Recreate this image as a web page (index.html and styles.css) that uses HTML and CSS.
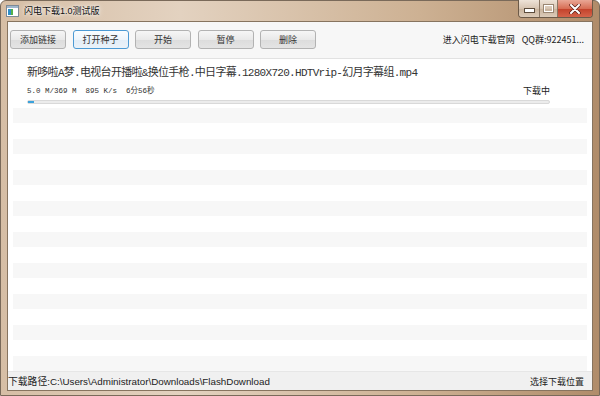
FILE: index.html
```html
<!DOCTYPE html>
<html lang="zh-CN">
<head>
<meta charset="UTF-8">
<title>闪电下载1.0测试版</title>
<link rel="stylesheet" href="styles.css">
</head>
<body>

<div class="window">
    <div class="titlebar">
        <svg class="app-icon" width="13" height="12" viewBox="0 0 13 12">
            <rect x="0.5" y="0.5" width="12" height="11" fill="#fff" stroke="#7d8a96"/>
            <rect x="1" y="1" width="11" height="2" fill="#9fb6cc"/>
            <rect x="2" y="4" width="3" height="6" fill="#2f8fc9"/>
            <rect x="5" y="4" width="2" height="6" fill="#53b04a"/>
        </svg>
        <span class="title">闪电下载1.0测试版</span>
        <div class="controls">
            <div class="ctl ctl-min"><span class="min-bar"></span></div>
            <div class="ctl ctl-max"><span class="max-box"></span></div>
            <div class="ctl ctl-close">
                <svg width="12" height="10" viewBox="0 0 12 10">
                    <path d="M2 1 L10 9 M10 1 L2 9" stroke="#5a2018" stroke-width="3.4" stroke-linecap="round"/>
                    <path d="M2 1 L10 9 M10 1 L2 9" stroke="#fff" stroke-width="2" stroke-linecap="round"/>
                </svg>
            </div>
        </div>
    </div>

    <div class="client">
        <div class="toolbar">
            <button class="btn">添加链接</button>
            <button class="btn btn-focus">打开种子</button>
            <button class="btn">开始</button>
            <button class="btn">暂停</button>
            <button class="btn">删除</button>
            <span class="spacer"></span>
            <span class="link">进入闪电下载官网</span>
            <span class="link">QQ群:922451...</span>
        </div>

        <div class="list">
            <div class="task">
                <div class="task-name">新哆啦A梦.电视台开播啦&amp;换位手枪.中日字幕.1280X720.HDTVrip-幻月字幕组.mp4</div>
                <div class="task-info">
                    <span class="stats">5.0 M/369 M&nbsp;&nbsp;895 K/s&nbsp;&nbsp;6分56秒</span>
                    <span class="state">下载中</span>
                </div>
                <div class="progress"><div class="progress-fill" style="width: 1.2%"></div></div>
            </div>
            <div class="row"></div>
            <div class="row"></div>
            <div class="row"></div>
            <div class="row"></div>
            <div class="row"></div>
            <div class="row"></div>
            <div class="row"></div>
            <div class="row"></div>
            <div class="row"></div>
            <div class="row"></div>
            <div class="row"></div>
            <div class="row"></div>
            <div class="row"></div>
            <div class="row"></div>
            <div class="row"></div>
            <div class="row"></div>
            <div class="row"></div>
        </div>

        <div class="statusbar">
            <span class="path">下载路径:C:\Users\Administrator\Downloads\FlashDownload</span>
            <span class="choose">选择下载位置</span>
        </div>
    </div>
</div>

</body>
</html>
```

FILE: styles.css
```css
body {
    margin: 0;
    padding: 0;
    overflow: hidden;
    font-family: "Liberation Sans", "Noto Sans CJK SC", sans-serif;
    font-size: 10px;
    color: #222;
}

.window {
    width: 600px;
    height: 396px;
    box-sizing: border-box;
    display: flex;
    flex-direction: column;
    background: linear-gradient(to right, #d6bea5 0%, #e3d2c0 30%, #cdb193 70%, #b08c6a 100%);
    border: 1px solid #7a6a5a;
    border-radius: 6px 6px 0 0;
    padding: 0 6px 4px 6px;
}

.titlebar {
    height: 20px;
    display: flex;
    align-items: center;
    position: relative;
}

.app-icon {
    margin: 1px 5px 0 -1px;
}

.title {
    font-size: 9px;
    color: #111;
    text-shadow: 0 0 6px #fff, 0 0 3px #fff;
}

.controls {
    position: absolute;
    top: -1px;
    right: 0;
    display: flex;
    height: 17px;
    border: 1px solid #6c5a48;
    border-top: none;
    border-radius: 0 0 4px 4px;
    overflow: hidden;
}

.ctl {
    display: flex;
    align-items: center;
    justify-content: center;
    background: linear-gradient(#eee3d8, #d7c4b1 50%, #c8b29b 51%, #dccbb9);
    border-right: 1px solid #8b7764;
}

.ctl-min {
    width: 20px;
}

.ctl-max {
    width: 17px;
}

.ctl-close {
    width: 34px;
    border-right: none;
    background: linear-gradient(#e9a795, #d76e55 50%, #c2412a 51%, #d5634a);
}

.min-bar {
    width: 9px;
    height: 3px;
    background: #fff;
    border: 1px solid #5c4c3c;
    margin-top: 4px;
}

.max-box {
    width: 7px;
    height: 5px;
    border: 1px solid #fff;
    outline: 1px solid #9a8672;
}

.client {
    flex: 1;
    display: flex;
    flex-direction: column;
    background: #fff;
    border: 1px solid #87745f;
}

.toolbar {
    height: 36px;
    display: flex;
    align-items: center;
    padding: 0 8px 0 2px;
    background: #f7f7f7;
    border-bottom: 1px solid #e2e2e2;
}

.btn {
    width: 56px;
    height: 19px;
    margin-right: 6.5px;
    padding: 0;
    font-family: "Noto Sans CJK SC", sans-serif;
    font-size: 9px;
    color: #333;
    background: linear-gradient(#f6f6f6, #e9e9e9 50%, #dcdcdc 51%, #e4e4e4);
    border: 1px solid #b2b2b2;
    border-radius: 3px;
}

.btn-focus {
    border-color: #4c9ad4;
    background: linear-gradient(#fafdff, #eef5fb 50%, #e2edf7 51%, #eaf2f9);
}

.spacer {
    flex: 1;
}

.link {
    font-family: "Noto Sans CJK SC", sans-serif;
    font-size: 9px;
    color: #222;
    margin-left: 7px;
}

.list {
    flex: 1;
    padding: 0 5px;
    background: #fff;
    overflow: hidden;
}

.task {
    height: 49px;
    padding: 6px 0 0 14px;
    box-sizing: border-box;
}

.task-name {
    font-family: "Liberation Mono", "Noto Sans CJK SC", monospace;
    font-size: 11px;
    letter-spacing: -0.7px;
    color: #333;
    line-height: 16px;
    white-space: nowrap;
}

.task-info {
    display: flex;
    justify-content: space-between;
    width: 523px;
    margin-top: 4px;
    line-height: 12px;
}

.stats {
    font-family: "Liberation Mono", "Noto Sans CJK SC", monospace;
    font-size: 7.5px;
    color: #333;
}

.state {
    font-family: "Noto Sans CJK SC", sans-serif;
    font-size: 9px;
    color: #222;
}

.progress {
    width: 521px;
    height: 2px;
    margin-top: 3px;
    background: #ececec;
    border: 1px solid #d9d9d9;
    border-radius: 2px;
}

.progress-fill {
    height: 100%;
    background: #3aa2dc;
}

.row {
    height: 15.5px;
}

.row:nth-child(even) {
    background: #f7f7f7;
}

.statusbar {
    height: 18px;
    display: flex;
    align-items: center;
    justify-content: space-between;
    padding: 0 8px 0 0;
    background: #f0f0f0;
    border-top: 1px solid #e6e6e6;
    font-size: 9.8px;
    color: #222;
}

.choose {
    font-family: "Noto Sans CJK SC", sans-serif;
    font-size: 9px;
}
```
